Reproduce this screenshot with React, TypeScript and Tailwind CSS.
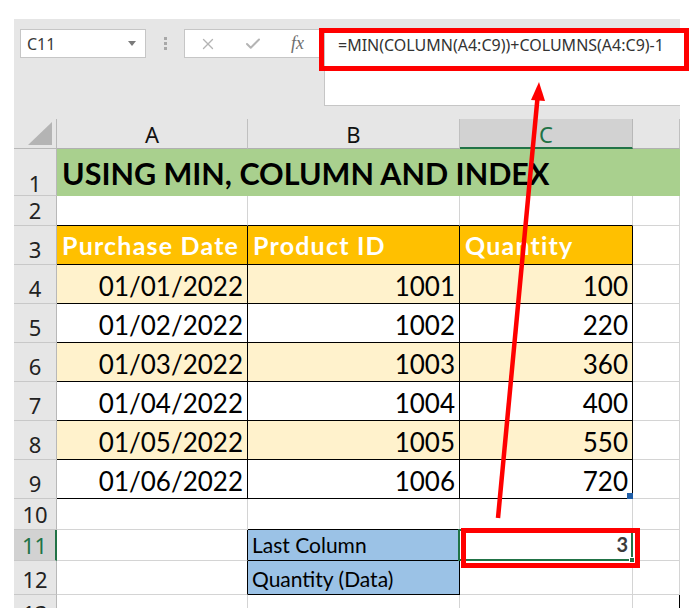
import { Check, X } from "lucide-react";
import clsx from "clsx";

const data = [
  ["01/01/2022", "1001", "100"],
  ["01/02/2022", "1002", "220"],
  ["01/03/2022", "1003", "360"],
  ["01/04/2022", "1004", "400"],
  ["01/05/2022", "1005", "550"],
  ["01/06/2022", "1006", "720"],
];

const row = "grid grid-cols-[43px_191px_212px_173px_47px]";
const gridLine = "border-r border-b border-[#d4d4d4]";
const calibri = "font-['Lato',sans-serif]";
const ui = "font-['Noto_Sans',sans-serif]";

function RowHead({ n, pb = "pb-[4px]", selected = false }: { n: number; pb?: string; selected?: boolean }) {
  return (
    <div
      className={clsx(
        "flex items-end justify-center border-b border-b-[#c8c8c8] text-[22px] leading-none",
        ui,
        pb,
        selected
          ? "border-r-2 border-r-[#217346] bg-[#d2d2d2] text-[#217346]"
          : "border-r border-r-[#b8b8b8] bg-[#e6e6e6] text-[#222]"
      )}
    >
      {n}
    </div>
  );
}

function ColHead({ label, selected = false }: { label?: string; selected?: boolean }) {
  return (
    <div
      className={clsx(
        "flex items-end justify-center text-[22px] leading-none",
        ui,
        selected
          ? "border-r border-r-[#b8b8b8] border-b-2 border-b-[#217346] bg-[#d2d2d2] pb-[2px] text-[#217346]"
          : "border-r border-r-[#c0c0c0] border-b border-b-[#b0b0b0] bg-[#e6e6e6] pb-[3px] text-[#111]"
      )}
    >
      {label}
    </div>
  );
}

export default function App() {
  return (
    <div className="relative h-[608px] w-[696px] overflow-hidden bg-white pt-[19px] pl-[14px] pr-[16px]">
      {/* formula bar */}
      <div className="flex h-[100px] bg-[#e6e6e6]">
        <div className="ml-[6px] mt-[10px] flex h-[29px] w-[126px] items-center justify-between border border-[#c6c6c6] bg-white pl-[6px] pr-[9px]">
          <span className={clsx(ui, "text-[16px] text-[#3a3a3a]")}>C11</span>
          <span className="h-0 w-0 border-x-[4px] border-t-[5px] border-x-transparent border-t-[#7a7a7a]" />
        </div>
        <div className="ml-[18px] mt-[18px] flex flex-col gap-[2px]">
          <span className="h-[3px] w-[3px] bg-[#a8a8a8]" />
          <span className="h-[3px] w-[3px] bg-[#a8a8a8]" />
          <span className="h-[3px] w-[3px] bg-[#a8a8a8]" />
        </div>
        <div className="ml-[17px] mt-[10px] flex h-[29px] w-[138px] items-center border border-[#c6c6c6] bg-white">
          <span className="flex w-[45px] justify-center">
            <X size={18} strokeWidth={1.8} color="#b4b4b4" />
          </span>
          <span className="flex w-[45px] justify-center">
            <Check size={18} strokeWidth={2.6} color="#b4b4b4" />
          </span>
          <span className="flex w-[45px] justify-center font-['Liberation_Serif',serif] text-[18px] italic text-[#6e6e6e]">
            fx
          </span>
        </div>
        <div className="ml-[2px] mt-[10px] h-[77px] flex-1 border-b border-l border-[#c6c6c6] bg-white pl-[13px] pt-[4px]">
          <span className={clsx(ui, "text-[16px] text-[#333]")}>=MIN(COLUMN(A4:C9))+COLUMNS(A4:C9)-1</span>
        </div>
      </div>

      {/* column headers */}
      <div className={clsx(row, "h-[30px]")}>
        <div className="relative border-r border-b border-[#b8b8b8] bg-[#e6e6e6]">
          <svg className="absolute right-[4px] bottom-[3px]" width="24" height="23" viewBox="0 0 24 23">
            <polygon points="0,23 24,0 24,23" fill="#b4b4b4" />
          </svg>
        </div>
        <ColHead label="A" />
        <ColHead label="B" />
        <ColHead label="C" selected />
        <ColHead />
      </div>

      {/* row 1 */}
      <div className={clsx(row, "h-[47px]")}>
        <RowHead n={1} pb="pb-[1px]" />
        <div className={clsx("col-span-4 flex items-end bg-[#a9d08e] pb-[8px] pl-[5px] text-[30.5px] font-bold leading-none text-black", calibri)}>
          USING MIN, COLUMN AND INDEX
        </div>
      </div>

      {/* row 2 */}
      <div className={clsx(row, "h-[30px]")}>
        <RowHead n={2} />
        <div className="border-r border-b border-r-[#d4d4d4] border-b-black" />
        <div className="border-r border-b border-r-[#d4d4d4] border-b-black" />
        <div className="border-r border-b border-r-[#d4d4d4] border-b-black" />
        <div className={gridLine} />
      </div>

      {/* row 3 header */}
      <div className={clsx(row, "h-[39px]")}>
        <RowHead n={3} />
        {["Purchase Date", "Product ID", "Quantity"].map((h) => (
          <div
            key={h}
            className={clsx("flex items-end overflow-hidden whitespace-nowrap border-r border-b border-black bg-[#ffc000] pb-[6px] pl-[5px] text-[25px] font-bold leading-none tracking-[1.2px] text-white", calibri)}
          >
            {h}
          </div>
        ))}
        <div className={gridLine} />
      </div>

      {/* data */}
      {data.map((r, i) => (
        <div key={i} className={clsx(row, "h-[39px]")}>
          <RowHead n={i + 4} />
          {r.map((v, j) => (
            <div
              key={j}
              className={clsx(
                "relative flex items-end justify-end border-r border-b border-black pb-[4px] pr-[4px] text-[26px] leading-none text-black",
                calibri,
                i % 2 === 0 ? "bg-[#fff2cc]" : "bg-white"
              )}
            >
              {v}
              {i === 5 && j === 2 && <span className="absolute -right-[1px] -bottom-[1px] h-[6px] w-[6px] bg-[#1f5ea8]" />}
            </div>
          ))}
          <div className={gridLine} />
        </div>
      ))}

      {/* row 10 */}
      <div className={clsx(row, "h-[31px]")}>
        <RowHead n={10} />
        <div className={gridLine} />
        <div className="border-r border-b border-r-[#d4d4d4] border-b-black" />
        <div className={gridLine} />
        <div className={gridLine} />
      </div>

      {/* row 11 */}
      <div className={clsx(row, "h-[31px]")}>
        <RowHead n={11} selected />
        <div className="border-r border-b border-r-black border-b-[#d4d4d4]" />
        <div className={clsx("flex items-end border-r border-b border-black bg-[#9bc2e6] pb-[5px] pl-[4px] text-[21px] leading-none text-black", calibri)}>
          Last Column
        </div>
        <div className={clsx("relative flex items-end justify-end border-r border-b border-[#d4d4d4] pb-[6px] pr-[4px] text-[20px] font-bold leading-none text-[#3c3c3c]", calibri)}>
          3
          <span className="absolute -left-[2px] -top-[1px] -right-[1px] -bottom-[1px] border-2 border-[#217346]" />
          <span className="absolute -right-[3px] -bottom-[3px] h-[6px] w-[6px] border border-white bg-[#217346]" />
        </div>
        <div className={gridLine} />
      </div>

      {/* row 12 */}
      <div className={clsx(row, "h-[34px]")}>
        <RowHead n={12} />
        <div className="border-r border-b border-r-black border-b-[#d4d4d4]" />
        <div className={clsx("flex items-end border-r border-b border-black bg-[#9bc2e6] pb-[5px] pl-[4px] text-[21px] leading-none text-black", calibri)}>
          Quantity (Data)
        </div>
        <div className={gridLine} />
        <div className={gridLine} />
      </div>

      {/* row 13 */}
      <div className={clsx(row, "h-[34px]")}>
        <RowHead n={13} />
        <div className={gridLine} />
        <div className={gridLine} />
        <div className={gridLine} />
        <div className="border-r border-r-black" />
      </div>

      {/* annotations */}
      <div className="absolute left-[319px] top-[28px] h-[43px] w-[370px] border-[5px] border-[#ff0000]" />
      <div className="absolute left-[461px] top-[528px] h-[40px] w-[179px] border-[5px] border-[#ff0000]" />
      <svg className="pointer-events-none absolute left-0 top-0" width="696" height="608" viewBox="0 0 696 608">
        <line x1="498" y1="518" x2="537.5" y2="98" stroke="#ff0000" strokeWidth="4.5" />
        <polygon points="539,82 545,101 531,100" fill="#ff0000" />
      </svg>
    </div>
  );
}
